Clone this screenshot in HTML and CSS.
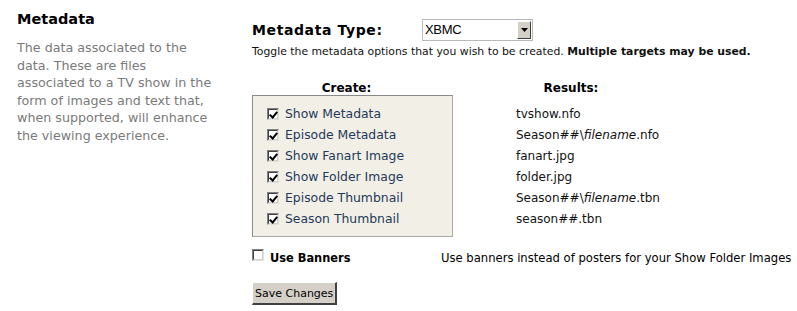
FILE: index.html
```html
<!DOCTYPE html>
<html>
<head>
<meta charset="utf-8">
<link rel="stylesheet" href="styles.css">
</head>
<body>
<div class="page">
  <div class="side">
    <h2 class="title">Metadata</h2>
    <p class="desc">The data associated to the data. These are files associated to a TV show in the form of images and text that, when supported, will enhance the viewing experience.</p>
  </div>
  <div class="main">
    <div class="type-row">
      <span class="type-label">Metadata Type:</span>
      <span class="select"><span class="select-val">XBMC</span><span class="select-btn"><svg width="7" height="4" viewBox="0 0 7 4"><path d="M0 0h7L3.5 4z" fill="#000"/></svg></span></span>
    </div>
    <div class="hint">Toggle the metadata options that you wish to be created. <b>Multiple targets may be used.</b></div>
    <div class="grid">
      <div class="head head-create">Create:</div>
      <div class="head head-results">Results:</div>
      <div class="box">
        <div class="opt"><span class="cb on"></span>Show Metadata</div>
        <div class="opt"><span class="cb on"></span>Episode Metadata</div>
        <div class="opt"><span class="cb on"></span>Show Fanart Image</div>
        <div class="opt"><span class="cb on"></span>Show Folder Image</div>
        <div class="opt"><span class="cb on"></span>Episode Thumbnail</div>
        <div class="opt"><span class="cb on"></span>Season Thumbnail</div>
      </div>
      <div class="results">
        <div class="res">tvshow.nfo</div>
        <div class="res">Season##\<i>filename</i>.nfo</div>
        <div class="res">fanart.jpg</div>
        <div class="res">folder.jpg</div>
        <div class="res">Season##\<i>filename</i>.tbn</div>
        <div class="res">season##.tbn</div>
      </div>
    </div>
    <div class="banner-row">
      <label class="banner-label"><span class="cb"></span>Use Banners</label>
      <span class="banner-desc">Use banners instead of posters for your Show Folder Images</span>
    </div>
    <button class="save">Save Changes</button>
  </div>
</div>
</body>
</html>
```
FILE: styles.css
```css
html, body {
  margin: 0;
  padding: 0;
  background: #fff;
}
body {
  font-family: "DejaVu Sans", Verdana, sans-serif;
  color: #000;
}
.page {
  display: flex;
  padding: 10px 0 0 17px;
}
.side {
  width: 203px;
  flex: none;
}
.title {
  margin: 0;
  font-size: 14.5px;
  font-weight: bold;
  line-height: 18px;
}
.desc {
  margin: 11px 0 0;
  width: 198px;
  font-size: 12.7px;
  line-height: 17.6px;
  color: #7a7a7a;
}
.main {
  margin-left: 32px;
  width: 545px;
  flex: none;
}
.type-row {
  display: flex;
  align-items: center;
  margin-top: 8px;
  height: 23px;
}
.type-label {
  font-size: 14px;
  font-weight: bold;
  letter-spacing: 0.6px;
  width: 170px;
}
.select {
  display: flex;
  width: 111px;
  height: 22px;
  box-sizing: border-box;
  border: 1px solid #b9b9b9;
  background: #fff;
  padding: 1px;
}
.select-val {
  flex: 1;
  font-family: "Liberation Sans", Arial, sans-serif;
  font-size: 13px;
  line-height: 18px;
  padding-left: 1px;
  letter-spacing: -0.3px;
}
.select-btn {
  width: 14px;
  box-sizing: border-box;
  background: #d4d0c8;
  border: 1px solid;
  border-color: #fff #404040 #404040 #fff;
  display: flex;
  align-items: center;
  justify-content: center;
}
.hint {
  font-size: 10.85px;
  line-height: 14px;
  margin-top: 4px;
  color: #111;
}
.grid {
  display: grid;
  grid-template-columns: 201px 236px;
  margin-top: 22px;
}
.head {
  font-size: 12px;
  font-weight: bold;
  text-align: center;
  line-height: 14px;
  padding-bottom: 0;
}
.head-create {
  padding-right: 12px;
}
.box {
  background: #f2efe6;
  border: 1px solid;
  border-color: #8a8a8a #a8a8a8 #a8a8a8 #8a8a8a;
  padding: 7px 0 7px 14px;
}
.opt {
  display: flex;
  align-items: center;
  height: 21px;
  font-size: 12.4px;
  color: #243a5a;
}
.cb {
  width: 12px;
  height: 12px;
  box-sizing: border-box;
  border: 1px solid;
  border-color: #808080 #e0e0e0 #e0e0e0 #808080;
  background: #fff;
  margin-right: 6px;
  flex: none;
  position: relative;
}
.cb::before {
  content: "";
  position: absolute;
  inset: 0;
  border: 1px solid;
  border-color: #404040 #d4d0c8 #d4d0c8 #404040;
}
.cb.on::after {
  content: "";
  position: absolute;
  left: 3px;
  top: 1px;
  width: 3px;
  height: 6px;
  border: solid #000;
  border-width: 0 2px 2px 0;
  transform: rotate(40deg);
}
.results {
  padding: 8px 0 0 63px;
}
.res {
  height: 21px;
  display: flex;
  align-items: center;
  font-size: 12px;
  color: #111;
  white-space: nowrap;
}
.banner-row {
  display: flex;
  align-items: center;
  margin-top: 13px;
  height: 16px;
}
.banner-label {
  display: flex;
  align-items: center;
  width: 189px;
  font-size: 11.4px;
  font-weight: bold;
}
.banner-label .cb {
  margin-top: -6px;
}
.banner-desc {
  font-size: 11.6px;
  white-space: nowrap;
}
.save {
  display: block;
  margin-top: 16px;
  font-family: "DejaVu Sans", Verdana, sans-serif;
  font-size: 11px;
  height: 23px;
  padding: 0 2px;
  background: #d4d0c8;
  border-style: solid;
  border-color: #fff #404040 #404040 #fff;
  border-width: 1px 2px 2px 1px;
  color: #000;
}
```
